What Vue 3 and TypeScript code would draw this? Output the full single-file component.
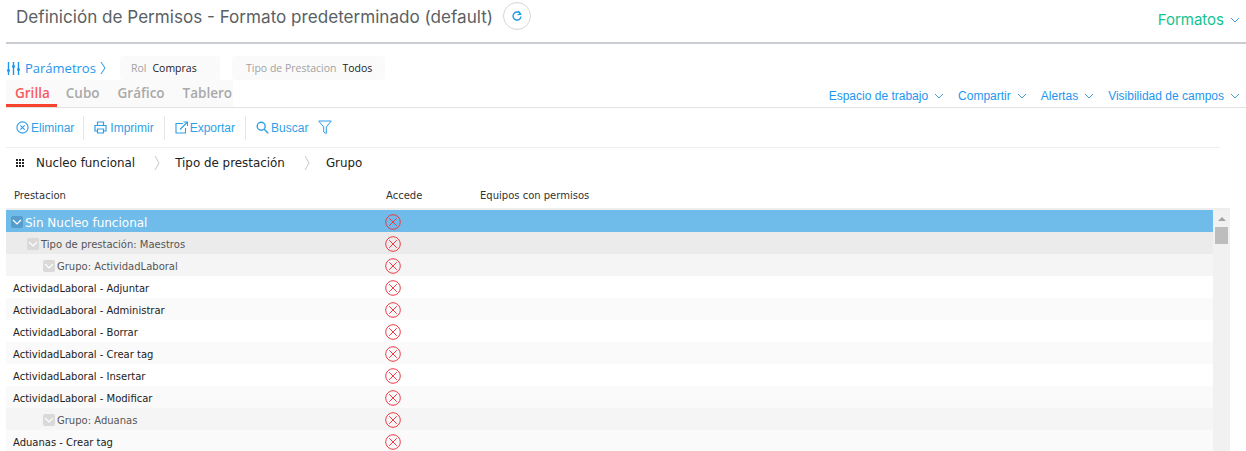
<script setup lang="ts">
interface Row { text: string; level: number }
const rows: Row[] = [
  { text: 'Sin Nucleo funcional', level: 0 },
  { text: 'Tipo de prestación: Maestros', level: 1 },
  { text: 'Grupo: ActividadLaboral', level: 2 },
  { text: 'ActividadLaboral - Adjuntar', level: 3 },
  { text: 'ActividadLaboral - Administrar', level: 3 },
  { text: 'ActividadLaboral - Borrar', level: 3 },
  { text: 'ActividadLaboral - Crear tag', level: 3 },
  { text: 'ActividadLaboral - Insertar', level: 3 },
  { text: 'ActividadLaboral - Modificar', level: 3 },
  { text: 'Grupo: Aduanas', level: 2 },
  { text: 'Aduanas - Crear tag', level: 3 },
]
const menus = ['Espacio de trabajo', 'Compartir', 'Alertas', 'Visibilidad de campos']
const tabs = ['Grilla', 'Cubo', 'Gráfico', 'Tablero']
</script>

<template>
  <div class="page">
    <header class="head">
      <h1 class="title">Definición de Permisos - Formato predeterminado (default)</h1>
      <span class="refresh">
        <svg width="12" height="12" viewBox="0 0 12 12" fill="none" stroke="#1e9be8" stroke-width="1.4">
          <path d="M9.6 4.2A4 4 0 1 0 10 6.5" />
          <path d="M7.4 1.2l2.4 3.2-3.4.3" stroke-width="1.1" />
        </svg>
      </span>
      <span class="formatos">Formatos
        <svg class="chev" width="10" height="6" viewBox="0 0 10 6" fill="none" stroke="#3f9fdc"><path d="M1 1l4 4 4-4" /></svg>
      </span>
    </header>

    <div class="params">
      <span class="param-link">
        <svg width="15" height="15" viewBox="0 0 15 15" fill="none" stroke="#1e96f0" stroke-width="1.4">
          <path d="M2.5 1v13M7.5 1v13M12.5 1v13" />
          <path d="M1 9.5h3M6 5.5h3M11 8.5h3" stroke-width="2" />
        </svg>
        Parámetros
        <svg width="6" height="14" viewBox="0 0 6 14" fill="none" stroke="#1e96f0"><path d="M1 1l4 6-4 6" /></svg>
      </span>
      <span class="chip chip-rol"><span class="chip-label">Rol</span><span class="chip-value">Compras</span></span>
      <span class="chip chip-tipo"><span class="chip-label">Tipo de Prestacion</span><span class="chip-value">Todos</span></span>
    </div>

    <nav class="tabs-row">
      <div class="tabs">
        <span v-for="(t, i) in tabs" :key="t" class="tab" :class="{ active: i === 0 }">{{ t }}</span>
      </div>
      <div class="menus">
        <span v-for="m in menus" :key="m" class="menu">{{ m }}
          <svg width="10" height="6" viewBox="0 0 10 6" fill="none" stroke="#3f9fdc"><path d="M1 1l4 4 4-4" /></svg>
        </span>
      </div>
    </nav>

    <div class="toolbar">
      <span class="tool t-del">
        <svg width="13" height="13" viewBox="0 0 13 13" fill="none" stroke="#2f9fe8" stroke-width="1.1"><circle cx="6.5" cy="6.5" r="5.6" /><path d="M4.3 4.3l4.4 4.4M8.7 4.3l-4.4 4.4" /></svg>
        Eliminar
      </span>
      <span class="tool t-print">
        <svg width="13" height="13" viewBox="0 0 13 13" fill="none" stroke="#2f9fe8" stroke-width="1.2"><path d="M3.5 4V1h6v3M3 10H1V4.5h11V10h-2" /><path d="M3.5 8h6v4h-6z" /></svg>
        Imprimir
      </span>
      <span class="tool t-export">
        <svg width="14" height="13" viewBox="0 0 14 13" fill="none" stroke="#2f9fe8" stroke-width="1.1"><path d="M8 2.5H1v9.5h9.5V7" /><path d="M5 8.5L12.5 1M8.5 1h4v4" /></svg>
        Exportar
      </span>
      <span class="tool t-search">
        <svg width="13" height="13" viewBox="0 0 13 13" fill="none" stroke="#2f9fe8" stroke-width="1.4"><circle cx="5.2" cy="5.2" r="4" /><path d="M8.2 8.2l4 4" /></svg>
        Buscar
      </span>
      <svg class="funnel" width="14" height="15" viewBox="0 0 14 15" fill="none" stroke="#2f9fe8"><path d="M.7 1h12.6L8.3 7v6.5l-2.6-1.5V7z" /></svg>
    </div>

    <div class="groups">
      <svg class="grip" width="8" height="8" viewBox="0 0 8 8" fill="#222"><path d="M0 0h2v2H0zM3 0h2v2H3zM6 0h2v2H6zM0 3h2v2H0zM3 3h2v2H3zM6 3h2v2H6zM0 6h2v2H0zM3 6h2v2H3zM6 6h2v2H6z" /></svg>
      <span class="group g1">Nucleo funcional</span>
      <svg class="sep" width="6" height="16" viewBox="0 0 6 16" fill="none" stroke="#c8c8c8"><path d="M1 1l4 7-4 7" /></svg>
      <span class="group g2">Tipo de prestación</span>
      <svg class="sep" width="6" height="16" viewBox="0 0 6 16" fill="none" stroke="#c8c8c8"><path d="M1 1l4 7-4 7" /></svg>
      <span class="group g3">Grupo</span>
    </div>

    <div class="thead">
      <span class="col-a">Prestacion</span>
      <span class="col-b">Accede</span>
      <span class="col-c">Equipos con permisos</span>
    </div>

    <div class="grid">
      <div class="body">
        <div v-for="(r, i) in rows" :key="i" class="row" :class="['lv' + r.level, { odd: r.level === 3 && i % 2 === 0 }]">
          <div class="cell-name">
            <span v-if="r.level < 3" class="toggle">
              <svg width="10" height="6" viewBox="0 0 10 6" fill="none" stroke="#fff" stroke-width="1.2"><path d="M1 1l4 4 4-4" /></svg>
            </span>
            <span class="name-text">{{ r.text }}</span>
          </div>
          <div class="cell-icon">
            <svg width="16" height="16" viewBox="0 0 16 16" fill="none" stroke="#ee3b46" stroke-width="1"><circle cx="8" cy="8" r="7.3" /><path d="M4.2 4.2l7.6 7.6M11.8 4.2l-7.6 7.6" /></svg>
          </div>
        </div>
      </div>
      <div class="scroll">
        <span class="arrow"></span>
        <span class="thumb"></span>
      </div>
    </div>
  </div>
</template>

<style scoped>
.page {
  width: 1246px;
  height: 451px;
  overflow: hidden;
  background: #fff;
  padding-left: 6px;
  box-sizing: border-box;
  font-family: "Liberation Sans", Arial, sans-serif;
}
.head {
  height: 44px;
  box-sizing: border-box;
  border-bottom: 2px solid #c9cdd1;
  display: flex;
  align-items: flex-start;
}
.title {
  margin: 7px 0 0 10px;
  font: 400 17.1px/20px Inter, sans-serif;
  color: #5a5f66;
}
.refresh {
  width: 28px;
  height: 28px;
  margin: 2px 0 0 10px;
  box-sizing: border-box;
  border: 1px solid #d6d6d6;
  border-radius: 50%;
  display: flex;
  align-items: center;
  justify-content: center;
}
.formatos {
  margin-left: auto;
  margin-top: 10px;
  margin-right: 6px;
  font: 400 15px/20px Inter, sans-serif;
  color: #14c391;
  display: flex;
  align-items: center;
  gap: 6px;
}
.params {
  height: 36px;
  display: flex;
  align-items: flex-start;
  font-family: "Open Sans", sans-serif;
}
.param-link {
  margin-top: 15px;
  display: flex;
  align-items: center;
  gap: 4px;
  width: 114px;
  font-size: 13px;
  line-height: 18px;
  color: #1e96f0;
}
.chip {
  margin-top: 12px;
  height: 24px;
  background: #fafafa;
  border-radius: 4px;
  display: flex;
  align-items: center;
  box-sizing: border-box;
  padding-left: 11px;
  font-size: 10.5px;
}
.chip-rol { width: 100px; }
.chip-tipo { width: 153px; margin-left: 12px; padding-left: 14px; }
.chip-label { color: #a2a2a2; margin-right: 6px; }
.chip-value { color: #222; }
.tabs-row {
  height: 28px;
  box-sizing: border-box;
  border-bottom: 1px solid #e2e2e2;
  display: flex;
  justify-content: space-between;
}
.tabs { display: flex; height: 27px; background: #fafafa; }
.tab {
  padding: 0 9px;
  font: 600 13.5px/26px "Open Sans", sans-serif;
  color: #a9a9a9;
}
.tab:last-child { padding-right: 1px; }
.tab.active {
  color: #f55a5f;
  padding-right: 7px;
  border-bottom: 3px solid #f8432d;
  margin-bottom: -1px;
  height: 24px;
}
.menus { display: flex; gap: 14px; padding-right: 6px; padding-top: 8px; }
.menu {
  font-size: 12px;
  line-height: 16px;
  color: #1e96f0;
  display: flex;
  align-items: center;
  gap: 6px;
  height: 16px;
}
.toolbar {
  width: 1214px;
  height: 40px;
  box-sizing: border-box;
  border-bottom: 1px solid #eee;
  display: flex;
  align-items: center;
}
.tool {
  display: flex;
  align-items: center;
  gap: 2px;
  height: 24px;
  padding: 0 10px;
  border-right: 1px solid #e6e6e6;
  font-size: 12px;
  color: #2f9fe8;
}
.t-del { padding-right: 9px; }
.t-print { gap: 3px; }
.t-export { gap: 1px; }
.t-search { border-right: 0; }
.groups {
  height: 30px;
  display: flex;
  align-items: center;
  font: 11.9px/16px "DejaVu Sans", sans-serif;
  color: #222;
}
.grip { margin-left: 10px; }
.g1 { margin-left: 12px; }
.sep { margin-left: 19px; }
.g2 { margin-left: 15px; }
.g3 { margin-left: 16px; }
.thead {
  height: 32px;
  box-sizing: border-box;
  width: 1224px;
  border-bottom: 2px solid #eee;
  display: flex;
  align-items: center;
  font: 10px/12px "DejaVu Sans", sans-serif;
  color: #333;
  padding-top: 5px;
}
.col-a { margin-left: 8px; width: 372px; }
.col-b { width: 94px; }
.grid {
  width: 1224px;
  display: flex;
}
.body { width: 1207px; }
.row {
  height: 22px;
  display: flex;
  align-items: center;
  font: 10px/12px "DejaVu Sans", sans-serif;
  color: #222;
}
.row.odd { background: #fafafa; }
.lv0 { background: #6fbbe9; color: #fff; font-size: 12px; }
.lv1 { background: #ebebeb; color: #555; }
.lv2 { background: #f5f5f5; color: #555; }
.cell-name {
  width: 379px;
  display: flex;
  align-items: center;
  box-sizing: border-box;
  padding-left: 7px;
}
.name-text { padding-top: 4px; }
.lv0 .cell-name { padding-left: 5px; gap: 2px; }
.lv1 .cell-name { padding-left: 21px; gap: 2px; }
.lv2 .cell-name { padding-left: 37px; gap: 2px; }
.toggle {
  width: 12px;
  height: 12px;
  margin-top: 2px;
  background: #d9d9d9;
  border-radius: 2px;
  display: flex;
  align-items: center;
  justify-content: center;
}
.lv0 .toggle { background: #569dcb; }
.cell-icon { display: flex; padding-top: 1px; }
.scroll {
  width: 17px;
  height: 242px;
  background: #f1f1f1;
  display: flex;
  flex-direction: column;
  align-items: center;
}
.arrow {
  margin-top: 7px;
  width: 0;
  height: 0;
  border-left: 4px solid transparent;
  border-right: 4px solid transparent;
  border-bottom: 4px solid #a3a3a3;
}
.thumb {
  margin-top: 6px;
  width: 13px;
  height: 17px;
  background: #bdbdbd;
}
</style>
